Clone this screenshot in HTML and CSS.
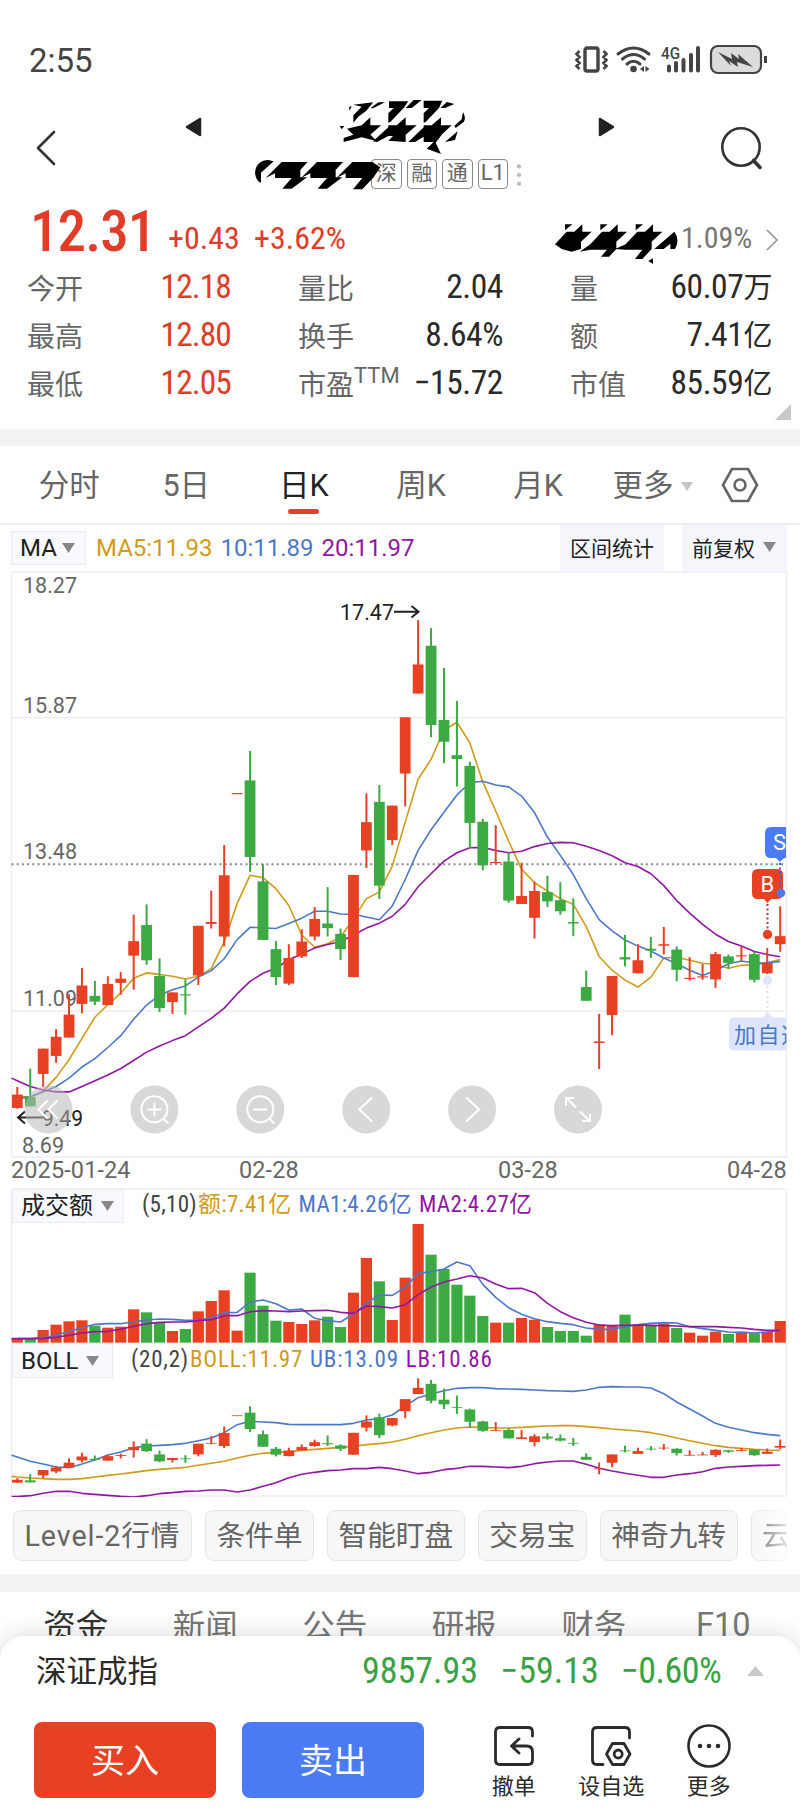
FILE: index.html
```html
<!DOCTYPE html>
<html lang="zh-CN">
<head>
<meta charset="utf-8">
<title>行情</title>
<link rel="stylesheet" href="styles.css">
</head>
<body>
<div class="screen">
  <div class="status">
    <span class="clock">2:55</span>
    <svg class="status-icons" width="196" height="32" viewBox="0 0 196 32" fill="none" stroke="#444">
      <rect x="11" y="4" width="13" height="23" rx="2" stroke-width="3.4"/>
      <path d="M5.500 7l-3 3 3 3-3 3 3 3-3 3 3 3M29.500 7l3 3-3 3 3 3-3 3 3 3-3 3" stroke-width="2.600"/>
      <path d="M44 10q15.500-12 31 0M48.500 15q11-9 22 0M53 20q6.500-5.500 13 0" stroke-width="3" stroke-linecap="round"/>
      <circle cx="59.500" cy="25" r="3.300" fill="#444" stroke="none"/>
      <path d="M70 22v6l-4-3zM71.500 22v6l4-3z" fill="#444" stroke="none"/>
      <path d="M95 22.500v4M102 19v7.500M109.500 16v10.500M117 11v15.500M124 4v22.500" stroke-width="4" stroke-linecap="round"/>
      <text x="87" y="15" textLength="19" lengthAdjust="spacingAndGlyphs" fill="#444" stroke="none" class="net">4G</text>
      <rect x="137" y="2" width="50" height="27" rx="7" fill="#dcdcdc" stroke-width="2.200"/>
      <path d="M191.500 12v7" stroke-width="3"/>
      <path d="M144 8l14 7-1-6 8 6-1-5 15 13-16-5 1 5-9-6 2 5z" fill="#444" stroke="none"/>
    </svg>
  </div>

  <header class="head">
    <svg class="back" width="24" height="38" viewBox="0 0 24 38"><path d="M20 3L4 19l16 16" fill="none" stroke="#333" stroke-width="2.600" stroke-linecap="round" stroke-linejoin="round"/></svg>
    <svg class="prev" width="18" height="20" viewBox="0 0 18 20"><path d="M15 2v16L2 10z" fill="#222" stroke="#222" stroke-width="2.500" stroke-linejoin="round"/></svg>
    <div class="title">
      <div class="badges"><span>深</span><span>融</span><span>通</span><span class="lv">L1</span><i></i></div>
      <svg class="cover" width="290" height="110" viewBox="0 0 870 330">
        <path d="M325 44L385 37 364 62 340 80 325 98V76L350 50zM376 55L400 37H420L384 55zM432 34H490L476 54 436 96 430 98V70L446 54H432zM482 54L506 30H530L500 54zM536 32H592L582 54 542 96 536 98V70L552 54H536zM586 54L606 36 628 42 600 54zM376 82V106H408L376 134 396 154 350 142 296 156 296 144 325 134 306 116 350 106zM482 82V106H515L482 134V156L430 152 444 138H430L396 156 384 154 430 112V106H455zM588 82V106H620L592 132 572 158 588 192 545 176 566 156H536V140L510 156H490L536 112V106H560zM654 66Q664 84 656 96L632 114 628 108 650 88zM600 156L638 124 630 150zM312 52L320 48 314 62zM284 108h14l-8 10z"/>
        <path d="M30 250Q32 212 70 210L86 214 48 248V278Q34 276 30 250zM62 264L110 216H188L166 240V262H186L140 296H112L140 264H90V250zM168 264L216 216H294L272 240V262H292L246 296H218L246 264H196V250zM274 264L322 216H382L406 232 386 262 352 298H324L352 264H302V250z"/>
      </svg>
    </div>
    <svg class="next" width="18" height="20" viewBox="0 0 18 20"><path d="M3 2v16l13-8z" fill="#222" stroke="#222" stroke-width="2.500" stroke-linejoin="round"/></svg>
    <svg class="search" width="46" height="46" viewBox="0 0 46 46" fill="none" stroke="#333"><circle cx="22" cy="22" r="18.700" stroke-width="2.600"/><path d="M34.500 35.500l6.500 7" stroke-width="3.600" stroke-linecap="round"/></svg>
  </header>

  <section class="quote">
    <div class="priceline">
      <span class="price num">12.31</span><span class="chg num">+0.43</span><span class="chg pct num">+3.62%</span>
      <div class="sector">
        <svg width="134" height="65" viewBox="0 0 402 195"><path d="M30 118L65 80H88L112 58V80H140L108 110V132L80 140 50 132zM60 58H82L60 76zM136 118L171 80H194L218 58V80H246L214 110V132L192 155H168L186 134H136L104 140zM166 58H188L166 76zM242 118L277 80H300L324 58V80H352L320 110V132L292 162H270L292 134H242L210 132zM272 58H294L272 76zM328 132L388 80Q406 104 390 132L376 132V116L356 132zM310 168l14-8v17z"/></svg>
        <span class="num">1.09%</span>
        <svg width="14" height="24" viewBox="0 0 14 24"><path d="M2 2l10 10L2 22" fill="none" stroke="#999" stroke-width="1.700"/></svg>
      </div>
    </div>
    <div class="stats">
      <div><label>今开</label><b class="up num">12.18</b></div><div><label>量比</label><b class="num">2.04</b></div><div><label>量</label><b class="num">60.07<em>万</em></b></div>
      <div><label>最高</label><b class="up num">12.80</b></div><div><label>换手</label><b class="num">8.64%</b></div><div><label>额</label><b class="num">7.41<em>亿</em></b></div>
      <div><label>最低</label><b class="up num">12.05</b></div><div><label>市盈<sup>TTM</sup></label><b class="num">−15.72</b></div><div><label>市值</label><b class="num">85.59<em>亿</em></b></div>
    </div>
    <svg class="corner" width="16" height="16"><path d="M16 0v16H0z" fill="#c8c8c8"/></svg>
  </section>

  <nav class="periods">
    <span class="first">分时</span><span>5日</span><span class="on">日K</span><span>周K</span><span>月K</span>
    <span class="more">更多<svg width="12" height="9"><path d="M0 0h12l-6 9z" fill="#c4c4c4"/></svg></span>
    <svg class="gear" width="38" height="36" viewBox="0 0 38 36" fill="none" stroke="#666" stroke-width="2.600"><path d="M11 2h16l9 16-9 16H11L2 18z" stroke-linejoin="round"/><circle cx="19" cy="18" r="5.500"/></svg>
  </nav>

  <div class="tools">
    <span class="pick ma">MA<svg width="13" height="10"><path d="M0 0h13L6.500 10z" fill="#888"/></svg></span>
    <span class="leg leg-ma"><span class="y">MA5:11.93</span><span class="b">10:11.89</span><span class="p">20:11.97</span></span>
    <span class="tool range">区间统计</span>
    <span class="tool adj">前复权<svg width="13" height="10"><path d="M0 0h13L6.500 10z" fill="#888"/></svg></span>
  </div>

  <svg id="kline" class="chart" width="800" height="587" viewBox="0 571 800 587"></svg>
  <div class="dates"><span>2025-01-24</span><span>02-28</span><span>03-28</span><span>04-28</span></div>

  <div class="pane vol">
    <svg id="volume" class="chart" width="800" height="155" viewBox="0 1188 800 155"></svg>
    <div class="bar"><span class="pick">成交额<svg width="13" height="10"><path d="M0 0h13L6.500 10z" fill="#888"/></svg></span>
    <span class="leg num"><span class="k">(5,10)</span><span class="y">额:7.41亿</span><span class="b">MA1:4.26亿</span><span class="p">MA2:4.27亿</span></span></div>
  </div>
  <div class="pane boll">
    <svg id="bands" class="chart" width="800" height="154" viewBox="0 1343 800 154"></svg>
    <div class="bar"><span class="pick">BOLL<svg width="13" height="10"><path d="M0 0h13L6.500 10z" fill="#888"/></svg></span>
    <span class="leg num"><span class="k">(20,2)</span><span class="y">BOLL:11.97</span><span class="b">UB:13.09</span><span class="p">LB:10.86</span></span></div>
  </div>

  <div class="chips"><span class="level">Level-2行情</span><span>条件单</span><span>智能盯盘</span><span>交易宝</span><span>神奇九转</span><span class="last">云参数</span></div>

  <nav class="news"><span class="on">资金</span><span>新闻</span><span>公告</span><span>研报</span><span>财务</span><span class="f10">F10</span></nav>

  <footer class="sheet">
    <div class="index"><span class="name">深证成指</span><span class="down num">9857.93</span><span class="down num">−59.13</span><span class="down pc num">−0.60%</span><svg width="17" height="10"><path d="M0 10h17L8.500 0z" fill="#c8c8c8"/></svg></div>
    <div class="actions">
      <button class="buy">买入</button><button class="sell">卖出</button>
      <div class="act"><svg width="44" height="44" viewBox="0 0 44 44" fill="none" stroke="#2b2b2b" stroke-width="2.800" stroke-linecap="round" stroke-linejoin="round"><path d="M40.500 12V8q0-4.500-4.500-4.500H8Q3.500 3.500 3.500 8v28q0 4.500 4.500 4.500h28q4.500 0 4.500-4.500v-8q0-6-6-6H20M27 15l-7.500 7 7.500 7"/></svg>撤单</div>
      <div class="act"><svg width="44" height="44" viewBox="0 0 44 44" fill="none" stroke="#2b2b2b" stroke-width="2.800" stroke-linecap="round" stroke-linejoin="round"><path d="M40.500 14V8q0-4.500-4.500-4.500H8Q3.500 3.500 3.500 8v28q0 4.500 4.500 4.500h6"/><path d="M23.500 19.500h11.500l6 10.500-6 10.500H23.500l-6-10.500z"/><circle cx="29.200" cy="30" r="4"/></svg>设自选</div>
      <div class="act"><svg width="44" height="44" viewBox="0 0 44 44" fill="#2b2b2b"><circle cx="22" cy="22" r="20.500" fill="none" stroke="#2b2b2b" stroke-width="2.600"/><circle cx="13" cy="22" r="2.300"/><circle cx="22" cy="22" r="2.300"/><circle cx="31" cy="22" r="2.300"/></svg>更多</div>
    </div>
  </footer>
</div>
<script src="chart.js"></script>
</body>
</html>
```
FILE: styles.css
```css
* { box-sizing: border-box; }
body { margin: 0; background: #fff; font-family: Roboto, "Noto Sans CJK SC", sans-serif; color: #2a2a2a; }
svg { display: block; flex: none; }
.screen { width: 800px; height: 1814px; overflow: hidden; display: flex; flex-direction: column; }
.num { font-stretch: 85%; }

.status { height: 95px; padding: 25px 30px 0 29px; display: flex; align-items: center; justify-content: space-between; color: #444; flex: none; }
.status-icons { overflow: visible; }
.clock { font-size: 33px; }
.net { font-size: 17px; font-weight: 500; }

.head { height: 105px; display: flex; align-items: flex-start; padding-left: 34px; flex: none; }
.back { margin-top: 34px; }
.prev { margin: 22px 0 0 127px; }
.title { position: relative; width: 290px; height: 110px; margin: -5px 0 0 42px; flex: none; }
.badges { display: flex; gap: 5px; padding: 69px 0 0 126px; }
.badges span { width: 30.500px; height: 30px; border: 1.500px solid #888; border-radius: 4px; font-size: 21px; line-height: 26px; text-align: center; color: #666; }
.badges .lv { font-size: 22px; }
.badges i { width: 4px; height: 26px; margin: 3px 0 0 4px; background: radial-gradient(circle, #bbb 1.800px, transparent 2.200px) 0 0 / 4px 8.700px; }
.cover { position: absolute; left: 0; top: 0; }
.next { margin: 22px 0 0 62px; }
.search { margin: 30px 0 0 104px; }

.quote { height: 229px; position: relative; flex: none; }
.priceline { height: 62.500px; padding-left: 30px; display: flex; }
.price { font-size: 57px; line-height: 64px; color: #e03c28; font-weight: 500; width: 138px; letter-spacing: -.9px; }
.chg { font-size: 32px; line-height: 77px; color: #e03c28; width: 86px; }
.pct { width: 291px; }
.sector { display: flex; align-items: center; height: 65px; margin-top: 5px; font-size: 30px; color: #777; }
.sector .num { width: 73px; margin-left: 2px; }
.sector svg:last-child { margin: 4px 0 0 11px; }
.stats { display: grid; grid-template-columns: 204px 205px 202px; column-gap: 67px; grid-auto-rows: 48px; padding-left: 27px; }
.stats div { display: flex; justify-content: space-between; align-items: center; }
.stats label { font-size: 28px; color: #666; white-space: nowrap; }
.stats sup { font-size: 22px; line-height: 0; vertical-align: 12px; }
.stats b { font-weight: 400; font-size: 33.500px; letter-spacing: -.4px; line-height: 40px; }
.stats em { font-style: normal; font-size: 29px; line-height: 0; }
.stats .up { color: #e03c28; letter-spacing: -.9px; }
.corner { position: absolute; right: 9px; bottom: 9px; }

.periods { height: 96px; border-top: 17px solid #f3f3f3; border-bottom: 2px solid #eee; display: grid; grid-template-columns: 121.500px 117.500px 117.500px 117px 117px 124px 1fr; align-items: center; font-size: 30.500px; line-height: 44px; color: #666; padding-left: 6px; flex: none; }
.periods span { text-align: center; position: relative; padding-top: 3px; }
.periods .first { padding-left: 5px; }
.periods .on { color: #222; }
.periods .on::after { content: ""; position: absolute; left: 43px; bottom: -6px; width: 31px; height: 5px; border-radius: 3px; background: #d9442f; }
.periods .more { display: flex; align-items: center; gap: 7px; padding-left: 16px; white-space: nowrap; }
.gear { margin-top: 1px; }

.tools { height: 46px; flex: none; display: flex; padding-left: 11px; align-items: center; background: #fff; }
.pick { display: flex; align-items: center; background: #f8f9fd; border: 1.500px solid #ebecf2; height: 34px; font-size: 24px; line-height: 30px; padding: 0 0 1px 8px; gap: 8px; color: #222; white-space: nowrap; flex: none; }
.ma { width: 75px; gap: 5px; font-size: 24px; padding-bottom: 0; }
.leg { display: flex; gap: 7px; font-size: 23px; white-space: nowrap; }
.leg-ma { padding-left: 10px; width: 474px; font-size: 24px; gap: 8px; }
.y { color: #d19a17; } .b { color: #4c78c8; } .p { color: #9116a5; } .k { color: #444; margin-right: -6px; }
.tool { background: #f5f6fb; height: 46px; font-size: 21px; display: flex; align-items: center; padding: 0 0 3px 10px; flex: none; color: #222; }
.range { width: 104px; margin-right: 18px; }
.adj { width: 105px; gap: 8px; }

.chart { overflow: hidden; flex: none; }
.axis { font-size: 22.500px; fill: #666; }
.dark { font-size: 22.500px; fill: #222; }
.dates { display: grid; grid-template-columns: 228px 259px 229px auto; height: 30px; padding-left: 11px; font-size: 23.500px; letter-spacing: .1px; line-height: 25px; color: #666; flex: none; }

.pane { position: relative; flex: none; }
.bar { position: absolute; left: 12px; top: 1px; display: flex; }
.vol .pick { width: 112px; }
.boll .pick { width: 101px; height: 35px; padding-bottom: 0; }
.vol .leg { margin-left: 18px; line-height: 31px; letter-spacing: .3px; }
.boll .leg { margin-left: 18px; line-height: 33px; letter-spacing: .8px; }
.boll .bar { top: 0; }

.chips { display: flex; gap: 13px; padding: 13px 0 0 13px; width: 787px; height: 77px; overflow: hidden; flex: none; }
.chips span { height: 51px; line-height: 51px; padding: 0 10.500px; border: 1.500px solid #e6e6e6; border-radius: 8px; background: #f7f7f7; font-size: 28.700px; color: #666; white-space: nowrap; flex: none; }
.chips .level { letter-spacing: .9px; }
.chips .last { -webkit-mask-image: linear-gradient(90deg, #000, transparent 44px); mask-image: linear-gradient(90deg, #000, transparent 44px); }

.news { border-top: 18px solid #f3f3f3; height: 80px; flex: none; display: grid; grid-template-columns: repeat(6, 129.500px); padding: 8px 0 0 11px; text-align: center; font-size: 32.500px; color: #777; }
.news .on { color: #333; }
.news .f10 { padding-top: 6px; }

.sheet { margin-top: -18px; height: 178px; position: relative; background: #fff; border-radius: 24px 24px 0 0; box-shadow: 0 -3px 22px rgba(0, 0, 0, .13); flex: none; }
.index { height: 69px; display: flex; align-items: center; padding-left: 36px; font-size: 30.500px; }
.index .name { width: 326px; padding-bottom: 3px; }
.index .down { color: #3aa244; font-size: 36px; margin-right: 22px; white-space: nowrap; }
.index .pc { letter-spacing: -.5px; margin-right: 26px; }
.actions { display: flex; padding: 17px 0 0 34px; }
.actions button { width: 182px; height: 76px; border: 0; border-radius: 8px; background: #e84023; color: #fff; font: 34px "Noto Sans CJK SC", sans-serif; margin-right: 26px; padding: 0 0 3px; }
.actions .sell { background: #4a7bf3; margin-right: 41px; }
.act { width: 97.500px; display: flex; flex-direction: column; align-items: center; font-size: 22px; line-height: 28px; gap: 5px; padding-top: 2px; }
```
FILE: chart.js
```js
const RED = '#e84023', GREEN = '#3caa43', Y = '#d19a17', B = '#4c78c8', P = '#9116a5';
const X = i => 17.3 + 12.93 * i;
const K = v => 560 + v / 2.6133;
const V = v => 1150 + v / 3;
const BK = v => V(685 + (v - 157) * 0.2455);

// colour, high, body top, body bottom, low
const candles = `r 1377 1397 1432 1434,g 1329 1403 1428 1428,r 1277 1277 1343 1377,r 1226 1246 1296 1314,r 1135 1188 1248 1248,r 1066 1112 1160 1185,g 1100 1139 1154 1163,r 1088 1108 1163 1163,r 1077 1094 1105 1136,r 927 996 1034 1123,g 900 954 1046 1058,g 1041 1087 1171 1181,r 1130 1130 1155 1186,g 1096 1135 1138 1188,r 956 956 1086 1111,r 864 946 951 963,r 745 824 984 1010,r 609 609 612 612,g 499 576 776 815,g 795 840 993 993,g 996 1017 1090 1111,r 1004 1040 1107 1111,r 965 997 1036 1040,r 907 938 984 994,g 855 950 962 984,g 963 977 1017 1045,r 823 823 1090 1090,r 610 685 759 805,g 588 632 851 886,r 642 642 732 745,r 411 411 558 644,r 157 273 349 349,g 178 224 431 463,g 282 418 475 531,g 368 510 520 592,g 527 538 687 753,g 676 684 798 811,r 693 789 792 794,g 765 788 890 896,r 791 878 899 899,r 841 865 935 989,g 825 868 892 907,g 842 889 918 927,g 884 946 950 983,g 1073 1116 1152 1152,r 1186 1258 1262 1330,r 1087 1087 1189 1242,g 980 1038 1044 1062,r 1004 1046 1080 1080,g 985 1016 1021 1040,r 959 1004 1008 1031,g 1010 1018 1071 1101,r 1038 1092 1095 1099,r 1056 1088 1091 1097,r 1024 1030 1096 1118,g 1031 1036 1053 1068,r 1009 1033 1036 1047,g 1024 1030 1097 1104,r 1014 1053 1080 1082,r 905 983 1004 1024`
  .split(',').map(s => { const [c, ...n] = s.split(' '); return [c === 'r' ? RED : GREEN, ...n.map(Number)]; });

const ma5 = [1403,1403,1388,1352,1306,1250,1195,1162,1132,1093,1079,1083,1088,1095,1088,1068,998,898,824,830,859,903,980,1012,1003,985,938,885,868,800,685,573,521,445,424,478,580,656,735,808,843,865,885,900,958,1036,1072,1098,1116,1090,1040,1038,1046,1054,1057,1067,1059,1058,1052,1044];
const ma10 = [1408,1403,1390,1376,1354,1325,1303,1274,1243,1200,1163,1137,1123,1113,1090,1073,1042,992,960,961,963,950,936,918,918,925,926,933,940,904,835,759,705,659,614,582,578,588,593,617,660,724,772,822,885,940,969,993,1009,1022,1040,1055,1072,1086,1073,1055,1048,1053,1053,1049];
const ma20 = [1361,1376,1385,1390,1390,1376,1361,1346,1329,1308,1286,1270,1256,1243,1220,1198,1171,1134,1101,1080,1067,1044,1030,1014,1005,997,980,962,949,931,900,854,820,787,765,752,751,759,765,761,749,741,738,739,748,759,773,791,801,820,851,890,923,952,978,997,1009,1023,1031,1037];
const vol = [567,567,540,524,514,511,527,533,530,478,487,517,543,537,484,453,421,542,368,467,512,516,522,511,500,531,428,324,394,510,383,222,314,357,404,437,498,518,518,504,509,531,543,543,557,523,527,494,527,527,521,534,548,557,545,552,545,550,545,513];
const v5 = [566,566,563,556,544,533,523,521,521,515,510,507,508,511,511,503,488,487,456,450,461,480,477,505,512,516,492,460,435,436,412,370,365,357,336,347,403,442,473,493,506,515,520,524,534,538,538,530,524,520,518,519,530,536,541,546,547,549,546,541];
const v10 = [566,566,565,562,556,549,545,544,538,529,521,517,516,516,512,509,497,497,485,482,483,485,483,482,481,487,490,468,470,474,464,434,411,396,387,377,384,402,416,415,428,460,485,503,517,525,527,526,525,526,527,528,530,530,530,532,534,538,541,541];
const ub = [921,934,942,951,953,942,930,915,906,893,888,886,884,880,872,864,848,824,814,816,818,823,824,824,824,824,820,810,806,795,768,743,732,722,715,713,713,716,717,718,720,722,723,724,720,712,710,711,711,714,731,756,777,798,820,832,840,848,853,857];
const mid = [981,984,986,988,988,986,981,976,972,967,962,958,955,952,946,940,934,924,916,910,907,905,901,898,895,892,889,884,881,876,868,857,848,840,834,831,832,834,834,832,830,828,827,827,830,833,837,840,843,848,855,864,872,880,887,892,895,898,900,901];
const lb = [1040,1037,1030,1024,1024,1030,1033,1036,1039,1041,1037,1031,1028,1024,1023,1020,1020,1026,1020,1009,998,983,973,967,962,960,956,956,952,956,963,971,967,959,955,949,949,951,953,949,941,936,933,933,943,955,963,970,976,982,982,975,971,965,955,951,949,947,946,945];

const line = (a, f, c, start) => `<polyline fill="none" stroke="${c}" stroke-width="1.6" stroke-linejoin="round" points="${start !== undefined ? `11.5,${f(start)} ` : ''}${a.map((v, i) => `${X(i)},${f(v)}`).join(' ')}"/>`;
const draw = f => candles.map(([c, h, t, b, l], i) =>
  `<path d="M${X(i)} ${f(h)}V${f(l)}" stroke="${c}" stroke-width="2"/><rect x="${X(i) - 5.4}" y="${f(t)}" width="10.8" height="${Math.max(f(b) - f(t), 0.8)}" fill="${c}"/>`).join('');
const rule = (y, x = '#eee') => `<path d="M11.5 ${y}H786.5" stroke="${x}" stroke-width="1.5"/>`;
const label = (x, y, s, w, cls = 'axis') => `<text class="${cls}" x="${x}" y="${y}" textLength="${w}" lengthAdjust="spacingAndGlyphs">${s}</text>`;

const icons = [
  'M-1-9l-9 9 9 9M9-9L0 0l9 9',
  'M13 0A13 13 0 1 0 8 10M-7 0H7M0-7V7M9 9l5 5M13 0A13 13 0 0 1 8 10',
  'M13 0A13 13 0 1 0 8 10M-7 0H7M9 9l5 5M13 0A13 13 0 0 1 8 10',
  'M6-12L-7 0 6 12', 'M-6-12L7 0-6 12',
  'M-2-2L-11-11M-12-4V-11.500H-4M2 2L11 11M12 4V11.500H4'];
const controls = icons.map((d, i) => `<g transform="translate(${48.5 + 105.9 * i} 1109.5)"><circle r="24" fill="#b8b8b8" fill-opacity=".55"/><path d="${d}" fill="none" stroke="#fff" stroke-width="2"/></g>`).join('');

document.getElementById('kline').innerHTML =
  rule(571.8) + rule(717.7) + rule(1011) + rule(1157) +
  '<path d="M11.5 571V1158M786.500 571V1158" stroke="#eee" stroke-width="1.5"/>' +
  '<path d="M11.5 864.300H786" stroke="#888" stroke-width="2" stroke-dasharray="2 3.200"/>' +
  label(23, 593, '18.27', 54) + label(23, 713, '15.87', 54) + label(23, 859, '13.48', 54) + label(23, 1006, '11.09', 54) + label(22, 1152.5, '8.69', 42) +
  line(ma5, K, Y) + line(ma10, K, B) + line(ma20, K, P, 1354) + draw(K) +
  label(340, 620, '17.47', 54, 'dark') + '<path d="M394 611.800H418M411.500 606l7 5.800-7 5.800" fill="none" stroke="#222" stroke-width="2"/>' +
  label(42, 1125.5, '9.49', 41, 'dark') + '<path d="M43 1117.500H18M25 1111.500l-7 6 7 6" fill="none" stroke="#222" stroke-width="2"/>' +
  controls +
  `<path d="M771 827H786V858H784L780 862 776 858H771Q765 858 765 852V833Q765 827 771 827z" fill="#4a7bf3"/>
   <path d="M758 869H777Q783 869 783 875V893Q783 899 777 899H771L767.500 903 764 899H758Q752 899 752 893V875Q752 869 758 869z" fill="${RED}"/>
   <circle cx="781" cy="893" r="4.300" fill="#4a7bf3"/><path d="M780 863V890" stroke="#4a5bd3" stroke-width="2" stroke-dasharray="2 2.500"/>
   <path d="M767.500 904V930" stroke="#b33" stroke-width="2" stroke-dasharray="2 2.500"/><circle cx="767.500" cy="934.500" r="4.700" fill="${RED}"/>
   <circle cx="767.500" cy="980.500" r="4.700" fill="#dfe5fb"/><path d="M767.500 986V1012" stroke="#dde" stroke-width="2" stroke-dasharray="2 3"/><path d="M762 1018l5.500-6 5.500 6z" fill="#dce5fb"/>
   <path d="M786 1017.500H734Q729 1017.500 729 1023V1045Q729 1050.500 734 1050.500H786z" fill="#dce5fb"/>
   <svg x="0" y="571" width="786.500" height="587" viewBox="0 571 786.500 587"><text x="773" y="850" font-size="22" fill="#fff">S</text><text x="760.500" y="891.500" font-size="22" fill="#fff">B</text><text x="734" y="1043" font-size="22" letter-spacing="1.500" fill="#4c78c8">加自选</text></svg>`;

document.getElementById('volume').innerHTML = rule(1189) + '<path d="M11.5 1189V1343M786.500 1189V1343" stroke="#eee" stroke-width="1.5"/>' +
  vol.map((v, i) => `<rect x="${X(i) - 5.6}" y="${V(v)}" width="11.2" height="${V(578) - V(v)}" fill="${candles[i][0]}"/>`).join('') + line(v5, V, B) + line(v10, V, P, 566);

document.getElementById('bands').innerHTML = rule(1496) + '<path d="M11.5 1343V1496M786.500 1343V1496" stroke="#eee" stroke-width="1.5"/>' +
  line(ub, V, B, 916) + line(mid, V, Y, 979) + line(lb, V, P, 1040) + draw(BK);
```
